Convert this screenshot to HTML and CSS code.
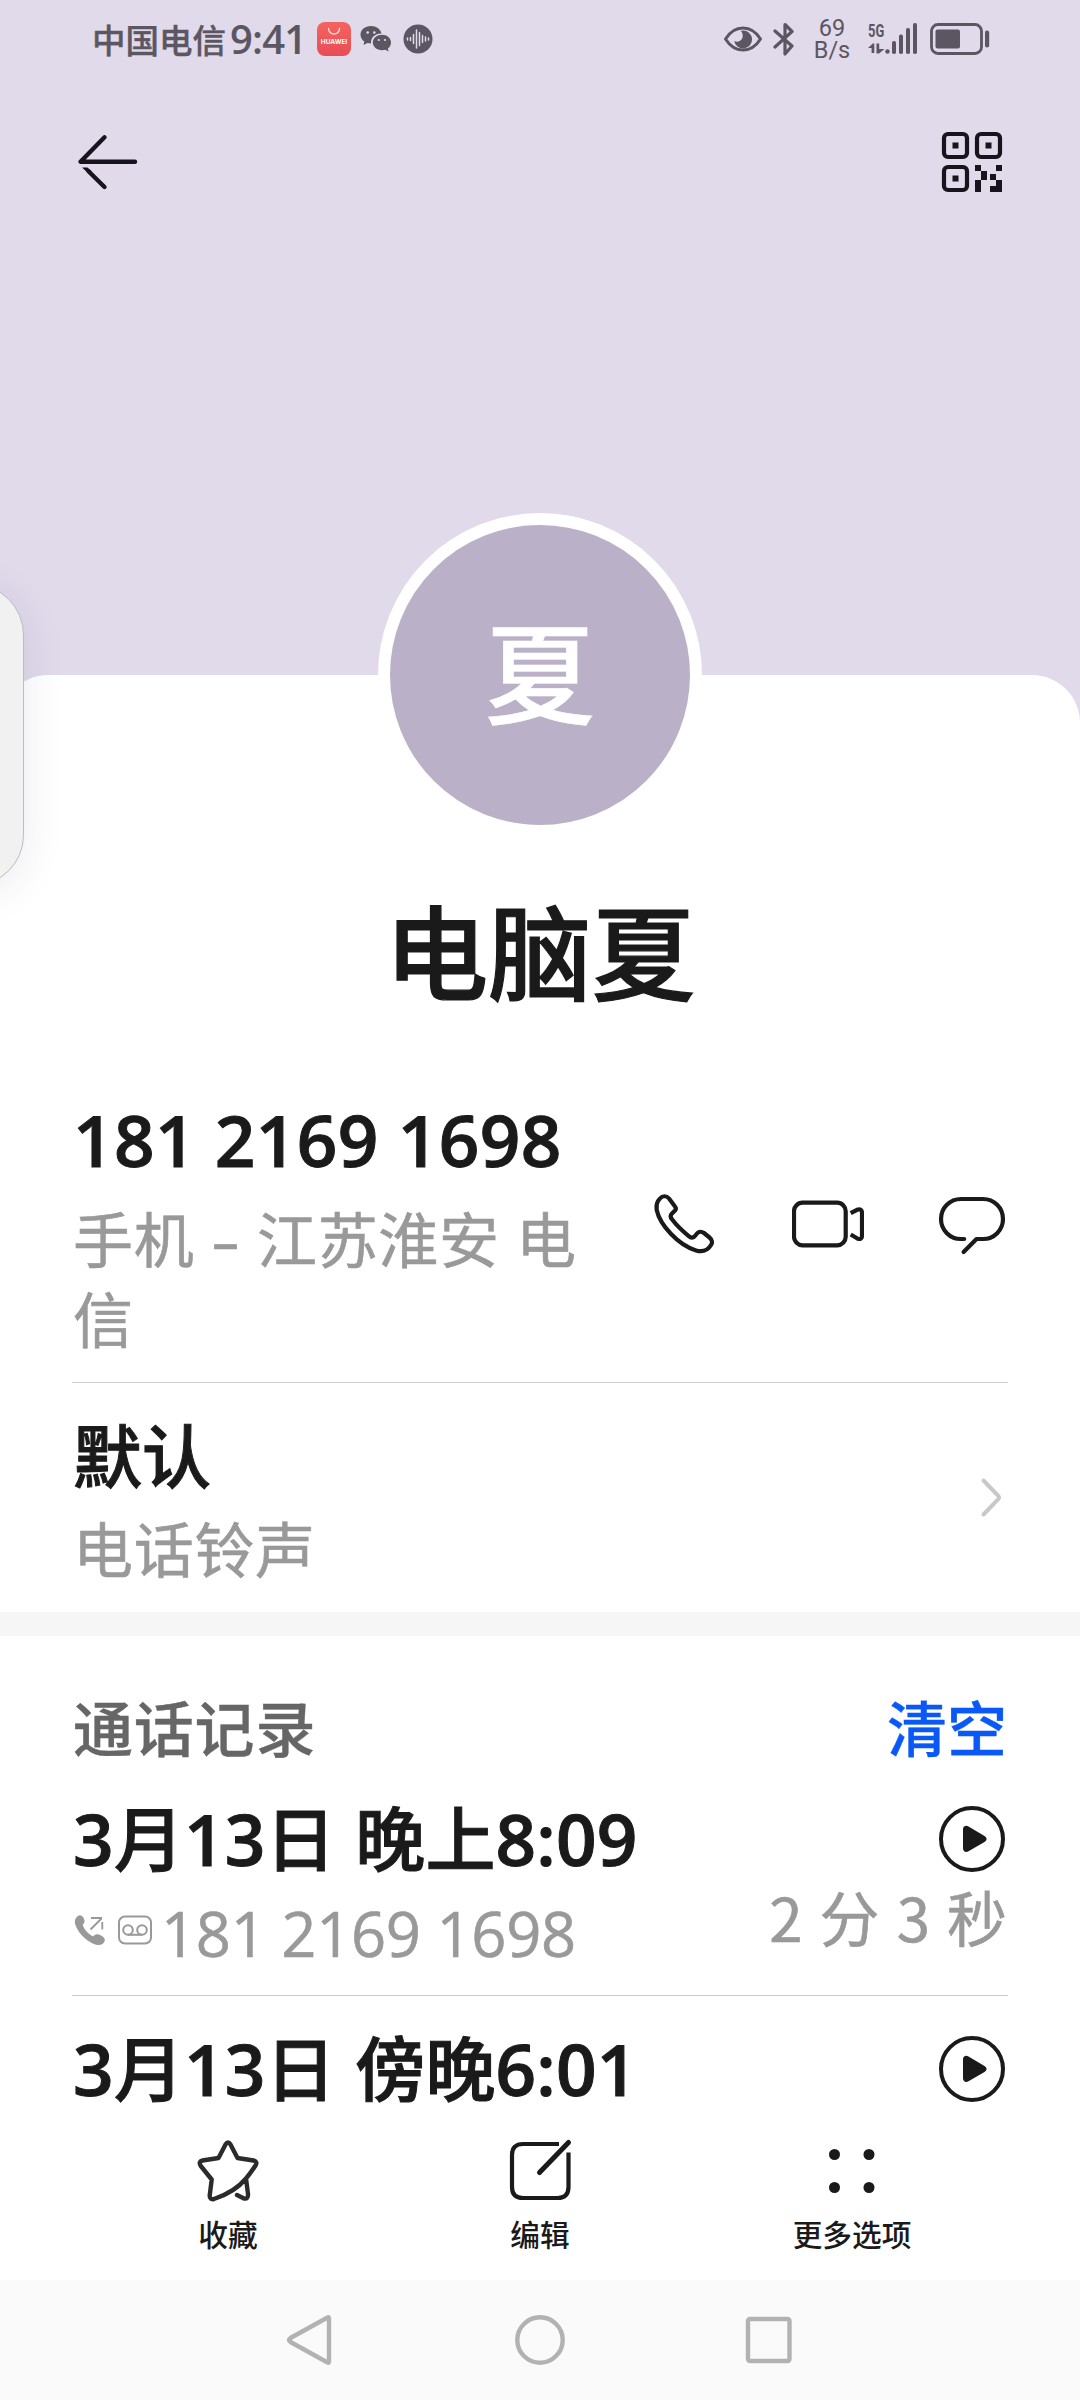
FILE: index.html
```html
<!DOCTYPE html>
<html lang="zh-CN">
<head>
<meta charset="utf-8">
<title>电脑夏</title>
<link rel="stylesheet" href="styles.css">
</head>
<body>
<div class="screen">
  <header class="status-bar">
    <div class="status-left">
      <span class="carrier">中国电信</span>
      <span class="clock">9:41</span>
      <span class="app-badge"><svg width="34" height="14" viewBox="0 0 34 14" fill="none" stroke="#ffd9d6" stroke-width="1.400" stroke-linecap="round"><path d="M11.500 6.500a5.500 5.500 0 0 0 11 0"/></svg><span class="app-badge-text">HUAWEI</span></span>
      <svg class="wechat" width="32" height="28" viewBox="0 0 32 28" fill="#5b5661"><path d="M11 1C5 1 .5 4.800.5 9.700c0 2.800 1.500 5.200 3.800 6.800L3.500 20l4-2c1.200.3 2.400.5 3.600.5-.8-6 4.500-10.300 10.500-10C20.500 4 16.200 1 11 1Z"/><path d="M31 17.500c0-4.400-4-7.700-9-7.700s-9.200 3.300-9.200 7.700 4.200 7.700 9.200 7.700c1.200 0 2.300-.2 3.300-.5l3.300 1.700-.8-2.800c2-1.400 3.200-3.500 3.200-6.100Z"/><g fill="#e0daeb"><circle cx="7.700" cy="7.500" r="1.300"/><circle cx="14.300" cy="7.500" r="1.300"/><circle cx="18.800" cy="15" r="1.100"/><circle cx="25" cy="15" r="1.100"/></g></svg>
      <svg width="30" height="30" viewBox="0 0 30 30"><circle cx="15" cy="15" r="14.500" fill="#5b5661"/><path d="M4.500 14v2M7.500 13.500v3M10.500 10.500v9M13.500 6v18M16.500 8.500v13M19.500 11.500v7M22.500 13v4M25.500 14v2" stroke="#e0daeb" stroke-width="1.500" stroke-linecap="round"/></svg>
    </div>
    <div class="status-right">
      <svg width="40" height="28" viewBox="0 0 40 28" fill="none"><path d="M2.500 14C7.500 6 13.500 3 20 3s12.500 3 17.500 11C32.500 22 26.500 25 20 25S7.500 22 2.500 14Z" stroke="#5b5661" stroke-width="3" stroke-linejoin="round"/><path d="M20 5.500a9 9 0 1 1-8.800 10.500 5.800 5.800 0 0 0 8.500-5.500c0-2-.8-3.500-2-4.500Z" fill="#5b5661"/></svg>
      <svg class="bluetooth" width="22" height="36" viewBox="0 0 22 36" fill="none" stroke="#5b5661" stroke-width="3.200" stroke-linejoin="round" stroke-linecap="round"><path d="M2 10l17 15-7 8V3.500l7 7L2 26"/></svg>
      <span class="net-speed"><span>69</span><span>B/s</span></span>
      <span class="signal">
        <span class="gen">5G</span>
        <svg width="50" height="34" viewBox="0 0 50 34" fill="#5b5661"><path d="M0 26l4.800-4.500h1.500V31H3.600v-5ZM8.500 21.500h2.700V27h5.300L11 31.500H8.500Z"/><circle cx="19.500" cy="29.500" r="2.200"/><rect x="24" y="19" width="4" height="13" rx="1.800"/><rect x="31" y="12.500" width="4" height="19.500" rx="1.800"/><rect x="38" y="6" width="4" height="26" rx="1.800"/><rect x="45" y="1" width="4" height="31" rx="1.800"/></svg>
      </span>
      <svg width="60" height="34" viewBox="0 0 60 34"><rect x="1.500" y="2.500" width="50" height="29" rx="6.500" fill="none" stroke="#5b5661" stroke-width="2.800"/><rect x="5.500" y="7.500" width="24.500" height="19" rx="2" fill="#5b5661"/><rect x="55" y="8.500" width="4.200" height="17" rx="2" fill="#5b5661"/></svg>
    </div>
  </header>

  <nav class="toolbar">
    <svg width="72" height="72" viewBox="0 0 72 72" fill="none" stroke="#17141b" stroke-width="4.400" stroke-linecap="round" stroke-linejoin="round"><path d="M32.500 11.300L8.500 35.800H63"/><path d="M10 41.500h5.500L20 45.500 17 48Z" stroke="none" fill="#17141b"/><path d="M16.500 45.300L32.500 61"/></svg>
    <svg width="72" height="72" viewBox="0 0 72 72"><g fill="none" stroke="#17141b" stroke-width="4.200"><rect x="8" y="8" width="23" height="23" rx="4"/><rect x="41" y="8" width="23" height="23" rx="4"/><rect x="8" y="41" width="23" height="23" rx="4"/></g><path fill="#17141b" d="M16.500 16.500h6v6h-6ZM49.500 16.500h6v6h-6ZM16.500 49.500h6v6h-6ZM39 39h6v6h6v9h-6v12h-6V54h6v-3h0v-6h-6ZM60 39h6v6h-6ZM54 48h6v6h6v12H54v-6h6v-6h-6Z"/></svg>
  </nav>

  <main class="card">
    <div class="avatar">夏</div>
    <h1 class="name">电脑夏</h1>

    <section class="row">
      <div class="row-text phone-text">
        <div class="primary number">181 2169 1698</div>
        <div class="secondary">手机 <span class="dash">-</span> 江苏淮安 电信</div>
      </div>
      <div class="actions">
        <svg width="72" height="72" viewBox="0 0 72 72"><path d="M10 13 L12 10.500 C14.500 7.500 18.500 7.500 21 10.500 L27 18.500 C28.200 20 28.200 21.200 27 22.500 L23.500 26 C22.400 27.300 22.600 29.500 24 31.300 C29 38 35 43.500 41 48.300 C42.700 50 45 50 46.500 48.500 L49 45.500 C50.500 43.500 53.500 43.300 56 45 L61.500 49.500 C64.500 52 64.500 55 63 57 C60 62 55 64.500 48 62.500 C30 57 12 37 8.700 22 C8.200 18 8.500 15.500 10 13Z"/></svg>
        <svg width="72" height="72" viewBox="0 0 72 72"><rect x="2" y="14.700" width="51.700" height="42.600" rx="8.500"/><path class="butt" d="M58.700 25.200L65 21.800Q70 20 70 25V47.500Q70 52.500 65 50.300L58.700 46.500"/></svg>
        <svg width="72" height="72" viewBox="0 0 72 72"><path d="M28.200 51H25A20 20 0 0 1 25 11H47A20 20 0 0 1 47 51H40.500L27.600 64"/></svg>
      </div>
    </section>

    <section class="row ringtone">
      <div class="row-text">
        <div class="primary title">默认</div>
        <div class="secondary">电话铃声</div>
      </div>
      <svg class="chevron" width="36" height="72" viewBox="0 0 36 72" fill="none" stroke="#c8c8c8" stroke-width="4" stroke-linecap="round" stroke-linejoin="round"><path d="M11.500 19.500L26.500 35.200Q27.500 36.500 26.500 37.800L11.500 53.500"/></svg>
    </section>

    <div class="band"></div>

    <section class="log">
      <div class="log-head"><h2>通话记录</h2><a class="clear">清空</a></div>
      <div class="row call">
        <div class="row-text">
          <div class="primary date"><b>3</b>月<b>13</b>日 晚上<b>8:09</b></div>
          <div class="secondary call-number">
            <svg width="32" height="32" viewBox="0 0 32 32"><path fill="#999" d="M5 1.500C7.500.5 9.800 3 10.500 6.500c.3 2-.5 3-1.800 4.200C10 15.500 14.500 20 19 22.300c1.800-1.500 3-2.500 5-2 3.500.8 7.500 4 6.800 6.500-.9 3-4 4.700-7.300 4.200C12.500 29 1 15.500.8 7.500.8 4.500 3 2.300 5 1.500Z"/><path fill="none" stroke="#999" stroke-width="1.800" d="M17 4h11M28.300 8v7.500M27.500 4.500L16.500 15.500"/></svg>
            <svg width="34" height="30" viewBox="0 0 34 30" fill="none" stroke="#999" stroke-width="2"><rect x="1" y="1.500" width="32" height="27" rx="6"/><circle cx="10" cy="15" r="4.800"/><circle cx="24" cy="15" r="4.800"/><path d="M10 19.800h14"/></svg>
            <span>181 2169 1698</span>
          </div>
        </div>
        <div class="side">
          <svg class="play" width="66" height="66" viewBox="0 0 66 66"><circle cx="33" cy="33" r="31" fill="none" stroke="#1a1a1a" stroke-width="4"/><path fill="#1a1a1a" d="M24 23.500C24 20 27 19 29.500 20.500L45.500 30C48.300 31.700 48.300 34.300 45.500 36L29.500 45.300C27 46.700 24 45.700 24 42.300Z"/></svg>
          <div class="duration">2 分 3 秒</div>
        </div>
      </div>
      <div class="row call">
        <div class="row-text">
          <div class="primary date"><b>3</b>月<b>13</b>日 傍晚<b>6:01</b></div>
        </div>
        <div class="side">
          <svg class="play" width="66" height="66" viewBox="0 0 66 66"><circle cx="33" cy="33" r="31" fill="none" stroke="#1a1a1a" stroke-width="4"/><path fill="#1a1a1a" d="M24 23.500C24 20 27 19 29.500 20.500L45.500 30C48.300 31.700 48.300 34.300 45.500 36L29.500 45.300C27 46.700 24 45.700 24 42.300Z"/></svg>
        </div>
      </div>
    </section>
  </main>

  <nav class="bottom-bar">
    <a class="tab">
      <svg width="72" height="72" viewBox="0 0 72 72" fill="none" stroke="#2b2b2b" stroke-width="4.400" stroke-linejoin="round" stroke-linecap="round"><path d="M54 44.500C47 53 37 60 22 65Q17.500 66 17.700 61.500L19.700 45.500 8.800 32Q6 27.500 10.500 26.500L26.500 24 33.500 10.500Q36 6.500 38.500 10.500L45.500 24 61.500 26.500Q66 27.500 63.500 31.500 59 38.500 54 44.500L56 60Q56.300 65.500 52 64.500L45 61"/></svg>
      <span>收藏</span>
    </a>
    <a class="tab">
      <svg width="72" height="72" viewBox="0 0 72 72" fill="none" stroke="#1a1a1a" stroke-width="4.200"><path d="M55 10H19Q8 10 8 21V53Q8 64 19 64H53.500Q64.500 64 64.500 53V18.500"/><path d="M64.500 8.500L35.500 38.500" stroke-width="5" stroke-linecap="round"/></svg>
      <span>编辑</span>
    </a>
    <a class="tab">
      <svg width="72" height="72" viewBox="0 0 72 72" fill="#1a1a1a"><circle cx="18.500" cy="20.500" r="5.500"/><circle cx="53" cy="20.500" r="5.500"/><circle cx="18.500" cy="53.500" r="5.500"/><circle cx="53" cy="53.500" r="5.500"/></svg>
      <span>更多选项</span>
    </a>
  </nav>

  <nav class="system-nav">
    <svg width="56" height="56" viewBox="0 0 56 56"><path d="M45.500 5.500Q47 4.500 47 6.500V49.500Q47 51.500 45.500 50.500L8.500 30Q5.500 28 8.500 26Z"/></svg>
    <svg width="56" height="56" viewBox="0 0 56 56"><circle cx="28" cy="28" r="22.700"/></svg>
    <svg width="56" height="56" viewBox="0 0 56 56"><rect x="6" y="7" width="41.500" height="42" rx="2"/></svg>
  </nav>

  <div class="edge-dock"></div>
</div>
</body>
</html>
```
FILE: styles.css
```css
* {
  box-sizing: border-box;
}

body {
  margin: 0;
  font-family: "Open Sans", "Noto Sans CJK SC", sans-serif;
  color: #1a1a1a;
}

svg {
  display: block;
  flex: none;
}

.screen {
  position: relative;
  display: flex;
  flex-direction: column;
  width: 1080px;
  height: 2400px;
  overflow: hidden;
  background: #e0daeb;
}

/* Status bar */
.status-bar {
  display: flex;
  justify-content: space-between;
  height: 78px;
  padding: 0 90px 0 92px;
  color: #5b5661;
}

.status-left,
.status-right {
  display: flex;
  align-items: center;
}

.carrier {
  font: 500 33.5px/78px "Noto Sans CJK SC", sans-serif;
  width: 138px;
  -webkit-text-stroke: .4px currentColor;
}

.clock {
  font-size: 40px;
  font-weight: 600;
  line-height: 80px;
  letter-spacing: -.8px;
  width: 87px;
}

.app-badge {
  display: flex;
  flex-direction: column;
  width: 34px;
  height: 34px;
  margin-right: 9px;
  border-radius: 8px;
  background: linear-gradient(#f4645f, #ea4c55);
  color: #fff;
}

.app-badge-text {
  font: 700 6.5px/12px Inter, sans-serif;
  text-align: center;
}

.wechat {
  margin-right: 11px;
}

.bluetooth {
  margin-left: 10px;
}

.net-speed {
  display: flex;
  flex-direction: column;
  align-items: center;
  margin-left: 19px;
  width: 36px;
  padding-top: 1px;
  font: 400 23.5px/21.5px Roboto, sans-serif;
}

.signal {
  position: relative;
  margin: 0 12px 0 18px;
}

.gen {
  position: absolute;
  left: 0;
  top: 0;
  font: 700 18px/18px Roboto, sans-serif;
  transform: scaleX(.72);
  transform-origin: left;
}

/* Toolbar */
.toolbar {
  display: flex;
  justify-content: space-between;
  height: 597px;
  padding: 48px 72px 0;
}

/* Contact card */
.card {
  display: flex;
  flex-direction: column;
  height: 1437px;
  border-radius: 48px 48px 0 0;
  background: #fff;
}

.avatar {
  align-self: center;
  flex: none;
  width: 324px;
  height: 324px;
  margin-top: -162px;
  border: 12px solid #fff;
  border-radius: 50%;
  background: #bab1c8;
  color: #fff;
  font: 500 110px/287px "Noto Sans CJK SC", sans-serif;
  text-align: center;
  -webkit-text-stroke: .6px currentColor;
}

.name {
  margin: 41px 0 2px;
  font: 500 103.5px/140px "Noto Sans CJK SC", sans-serif;
  text-align: center;
  -webkit-text-stroke: 1.2px currentColor;
}

.row {
  display: flex;
  flex: none;
  justify-content: space-between;
  margin: 0 72px;
  padding: 31px 0 23px;
}

.row:first-of-type {
  height: 363px;
  padding-top: 78px;
  border-bottom: 1px solid #cbcbcb;
}

.row-text {
  display: flex;
  flex-direction: column;
  gap: 12px;
}

.phone-text {
  gap: 18px;
  width: 520px;
}

.primary {
  font-size: 71px;
  font-weight: 500;
  line-height: 84px;
  -webkit-text-stroke: 1px currentColor;
}

.number {
  padding-left: 1px;
  font-weight: 600;
  letter-spacing: .4px;
}

.title {
  padding-left: 1px;
  font-size: 69px;
}

.date {
  padding-left: 1px;
  font-size: 70px;
  letter-spacing: .2px;
  word-spacing: 1px;
}

.date b {
  font-size: 71px;
  font-weight: 600;
}

.secondary {
  padding-left: 1px;
  color: #999;
  font-size: 60px;
  letter-spacing: .7px;
  line-height: 80px;
  -webkit-text-stroke: .6px currentColor;
}

.dash {
  display: inline-block;
  width: 30px;
  text-align: center;
  transform: scaleX(1.5);
}

.actions {
  display: flex;
  gap: 72px;
  padding-top: 90px;
}

.actions svg {
  fill: none;
  stroke: #1a1a1a;
  stroke-width: 4.2px;
  stroke-linecap: round;
  stroke-linejoin: round;
}

.actions .butt {
  stroke-linecap: butt;
}

.ringtone {
  height: 229px;
}

.chevron {
  margin-top: 47px;
}

.band {
  flex: none;
  height: 24px;
  background: #f6f6f6;
}

/* Call log */
.log-head {
  display: flex;
  justify-content: space-between;
  height: 130px;
  padding: 53px 72px 0 73px;
  font-size: 60px;
  font-weight: 500;
  line-height: 80px;
  -webkit-text-stroke: .4px currentColor;
}

.log-head h2 {
  margin: 0;
  color: #666;
  font-size: 60px;
  font-weight: 500;
  letter-spacing: .8px;
}

.clear {
  margin-right: 1px;
  color: #0a59f7;
}

.call {
  height: 230px;
  border-bottom: 1px solid #cbcbcb;
}

.call:last-child {
  height: 116px;
  padding-bottom: 0;
  border-bottom: 0;
}

.call-number {
  display: flex;
  padding-left: 2px;
  font-size: 61.5px;
  letter-spacing: -.3px;
}

.call-number svg {
  margin: 21px 12px 0 0;
}

.call-number svg + svg {
  margin: 22px 9px 0 0;
}

.side {
  display: flex;
  flex-direction: column;
  align-items: flex-end;
  gap: 4px;
  padding-top: 9px;
}

.play {
  margin-right: 3px;
}

.duration {
  margin-right: 1px;
  color: #999;
  font: 400 60px/80px "Noto Sans CJK SC", sans-serif;
  word-spacing: 3.6px;
  -webkit-text-stroke: .6px currentColor;
}

/* Bottom actions */
.bottom-bar {
  display: flex;
  justify-content: center;
  height: 168px;
  padding-top: 22px;
  background: #fff;
}

.tab {
  display: flex;
  flex-direction: column;
  align-items: center;
  width: 312px;
  font: 500 29.7px/44px "Noto Sans CJK SC", sans-serif;
}

.tab span {
  margin-top: 6px;
}

.system-nav {
  display: flex;
  justify-content: center;
  gap: 174px;
  height: 120px;
  padding-top: 32px;
  background: #fafafa;
}

.system-nav svg {
  fill: none;
  stroke: #b2b2b2;
  stroke-width: 4.4px;
}

/* Edge dock pulled in from the left */
.edge-dock {
  position: absolute;
  left: -80px;
  top: 584px;
  width: 104px;
  height: 302px;
  border: 1px solid #bdbdbd;
  border-radius: 51px;
  background: #f1f1f1;
  box-shadow: 0 6px 40px rgba(60, 40, 90, .1);
}
```
